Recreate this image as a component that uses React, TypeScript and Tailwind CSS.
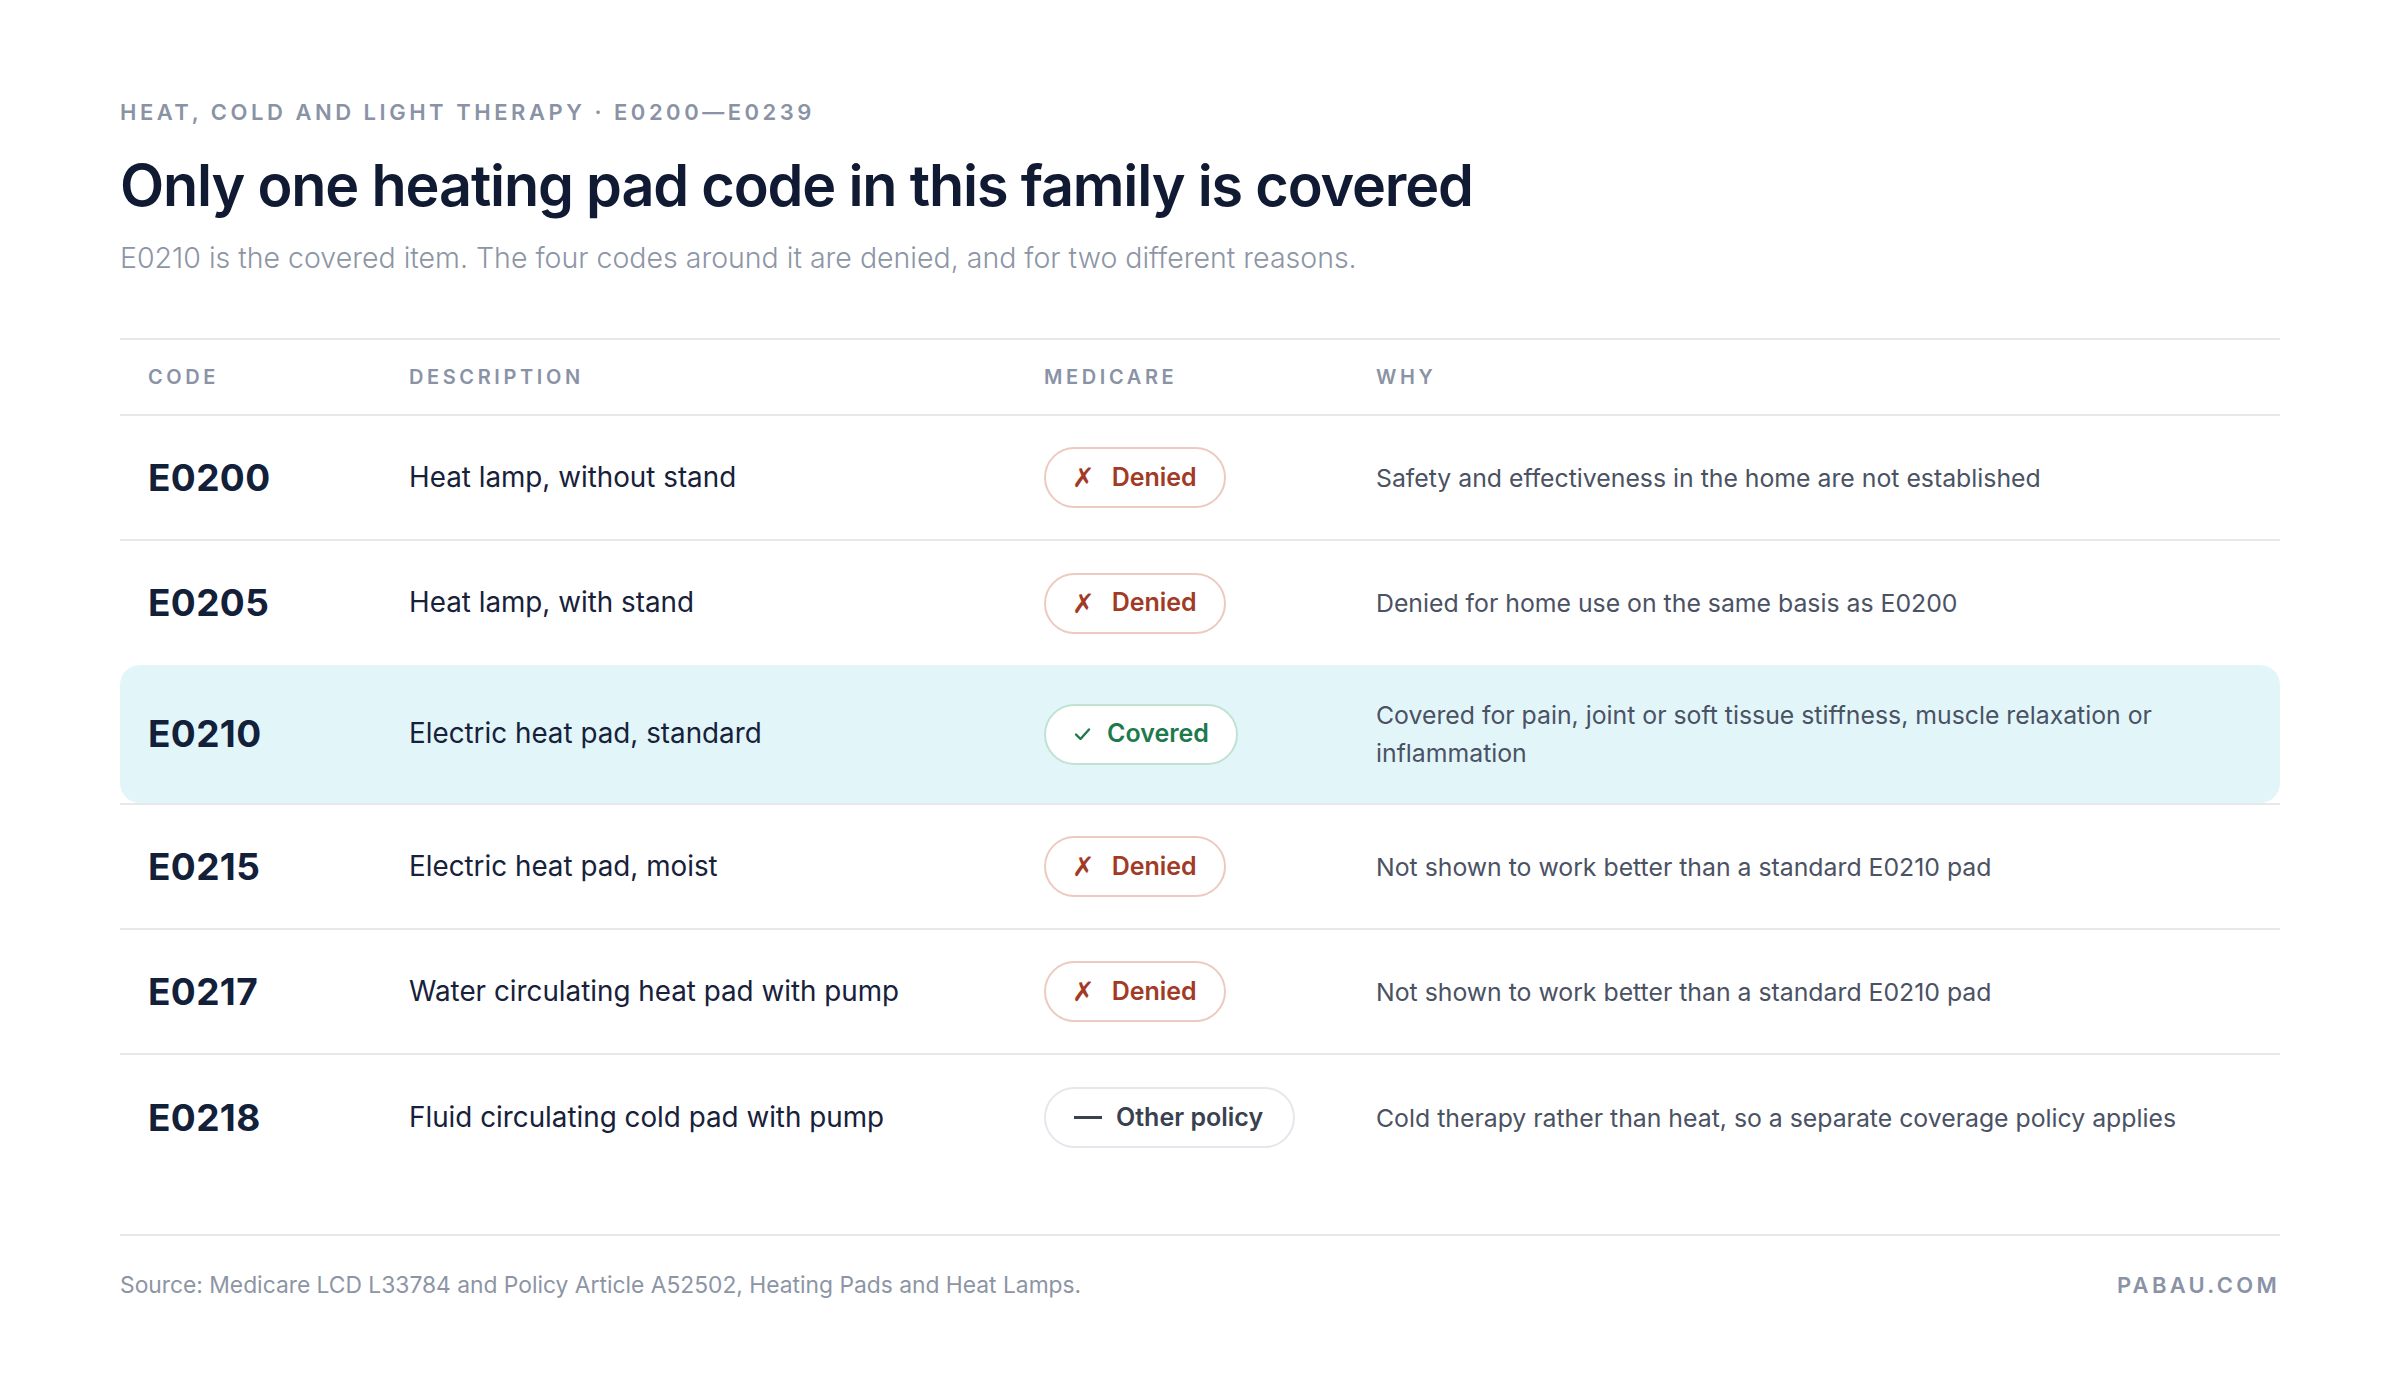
import React from "react";

type Status = "denied" | "covered" | "other";

const rows: { code: string; desc: string; status: Status; why: string }[] = [
  { code: "E0200", desc: "Heat lamp, without stand", status: "denied", why: "Safety and effectiveness in the home are not established" },
  { code: "E0205", desc: "Heat lamp, with stand", status: "denied", why: "Denied for home use on the same basis as E0200" },
  { code: "E0210", desc: "Electric heat pad, standard", status: "covered", why: "Covered for pain, joint or soft tissue stiffness, muscle relaxation or inflammation" },
  { code: "E0215", desc: "Electric heat pad, moist", status: "denied", why: "Not shown to work better than a standard E0210 pad" },
  { code: "E0217", desc: "Water circulating heat pad with pump", status: "denied", why: "Not shown to work better than a standard E0210 pad" },
  { code: "E0218", desc: "Fluid circulating cold pad with pump", status: "other", why: "Cold therapy rather than heat, so a separate coverage policy applies" },
];

function Pill({ status }: { status: Status }) {
  if (status === "denied") {
    return (
      <div className="inline-flex h-[61px] items-center gap-[17px] rounded-full border-2 border-[#edcabf] bg-white pl-[26px] pr-[27px] text-[25px] font-semibold text-[#a23b26]">
        <span className="font-['DejaVu_Sans',sans-serif] text-[27px] leading-none">✗</span>
        <span>Denied</span>
      </div>
    );
  }
  if (status === "covered") {
    return (
      <div className="inline-flex h-[61px] items-center gap-[16px] rounded-full border-2 border-[#c0e2d0] bg-white pl-[28px] pr-[27px] text-[25px] font-semibold text-[#1c7a4c]">
        <svg width="17" height="14" viewBox="0 0 17 14" fill="none">
          <path d="M2 7.5 L6.5 12 L15 2.5" stroke="#1c7a4c" strokeWidth="2.4" strokeLinecap="round" strokeLinejoin="round" />
        </svg>
        <span>Covered</span>
      </div>
    );
  }
  return (
    <div className="inline-flex h-[61px] items-center gap-[14px] rounded-full border-2 border-[#e4e7eb] bg-white pl-[28px] pr-[30px] text-[25px] font-semibold text-[#394150]">
      <span className="block h-[3px] w-[28px] bg-[#394150]" />
      <span>Other policy</span>
    </div>
  );
}

export default function App() {
  return (
    <div
      className="w-[2400px] h-[1386px] bg-white px-[120px] pt-[100px]"
      style={{ fontFamily: "Inter, 'Noto Sans', sans-serif" }}
    >
      <div className="text-[22px] leading-[24px] font-semibold tracking-[0.16em] text-[#8a93a6]">
        HEAT, COLD AND LIGHT THERAPY · E0200—E0239
      </div>
      <h1 className="mt-[27px] text-[57.5px] leading-[68px] font-semibold tracking-[-0.02em] text-[#111a33]">
        Only one heating pad code in this family is covered
      </h1>
      <p className="mt-[21px] text-[28.5px] leading-[36px] font-light text-[#8d95a5]">
        E0210 is the covered item. The four codes around it are denied, and for two different reasons.
      </p>

      <div className="mt-[62px] border-t-2 border-[#e6e8ec]">
        <div className="grid h-[76px] grid-cols-[261px_635px_332px_1fr] items-center border-b-2 border-[#e6e8ec] text-[20px] font-semibold tracking-[0.18em] text-[#8a93a6]">
          <div className="px-[28px]">CODE</div>
          <div className="px-[28px]">DESCRIPTION</div>
          <div className="px-[28px]">MEDICARE</div>
          <div className="px-[28px]">WHY</div>
        </div>

        {rows.map((r, i) => {
          const highlighted = r.status === "covered";
          const beforeHighlight = rows[i + 1]?.status === "covered";
          const last = i === rows.length - 1;
          const border = beforeHighlight || last ? "" : "border-b-2 border-[#e6e8ec]";
          const height = highlighted ? "h-[140px]" : beforeHighlight ? "h-[124px]" : "h-[125px]";
          return (
            <div key={r.code} className={`${height} ${border}`}>
              <div
                className={`grid h-full grid-cols-[261px_635px_332px_1fr] items-center ${
                  highlighted ? "rounded-[20px] bg-[#e2f6fa]" : ""
                }`}
              >
                <div className="px-[28px] text-[37px] font-bold tracking-[0.01em] text-[#13203a]">{r.code}</div>
                <div className="px-[28px] text-[27.8px] text-[#17213a]">{r.desc}</div>
                <div className="px-[28px]">
                  <Pill status={r.status} />
                </div>
                <div className="pl-[28px] pr-[80px] text-[24.8px] leading-[38px] text-[#4a5263]">{r.why}</div>
              </div>
            </div>
          );
        })}
      </div>

      <div className="mt-[54px] flex items-center justify-between border-t-2 border-[#e6e8ec] pt-[35px]">
        <div className="text-[22.8px] leading-[28px] text-[#8d95a5]">
          Source: Medicare LCD L33784 and Policy Article A52502, Heating Pads and Heat Lamps.
        </div>
        <div className="text-[22px] leading-[28px] font-semibold tracking-[0.15em] text-[#8a93a6]">PABAU.COM</div>
      </div>
    </div>
  );
}
